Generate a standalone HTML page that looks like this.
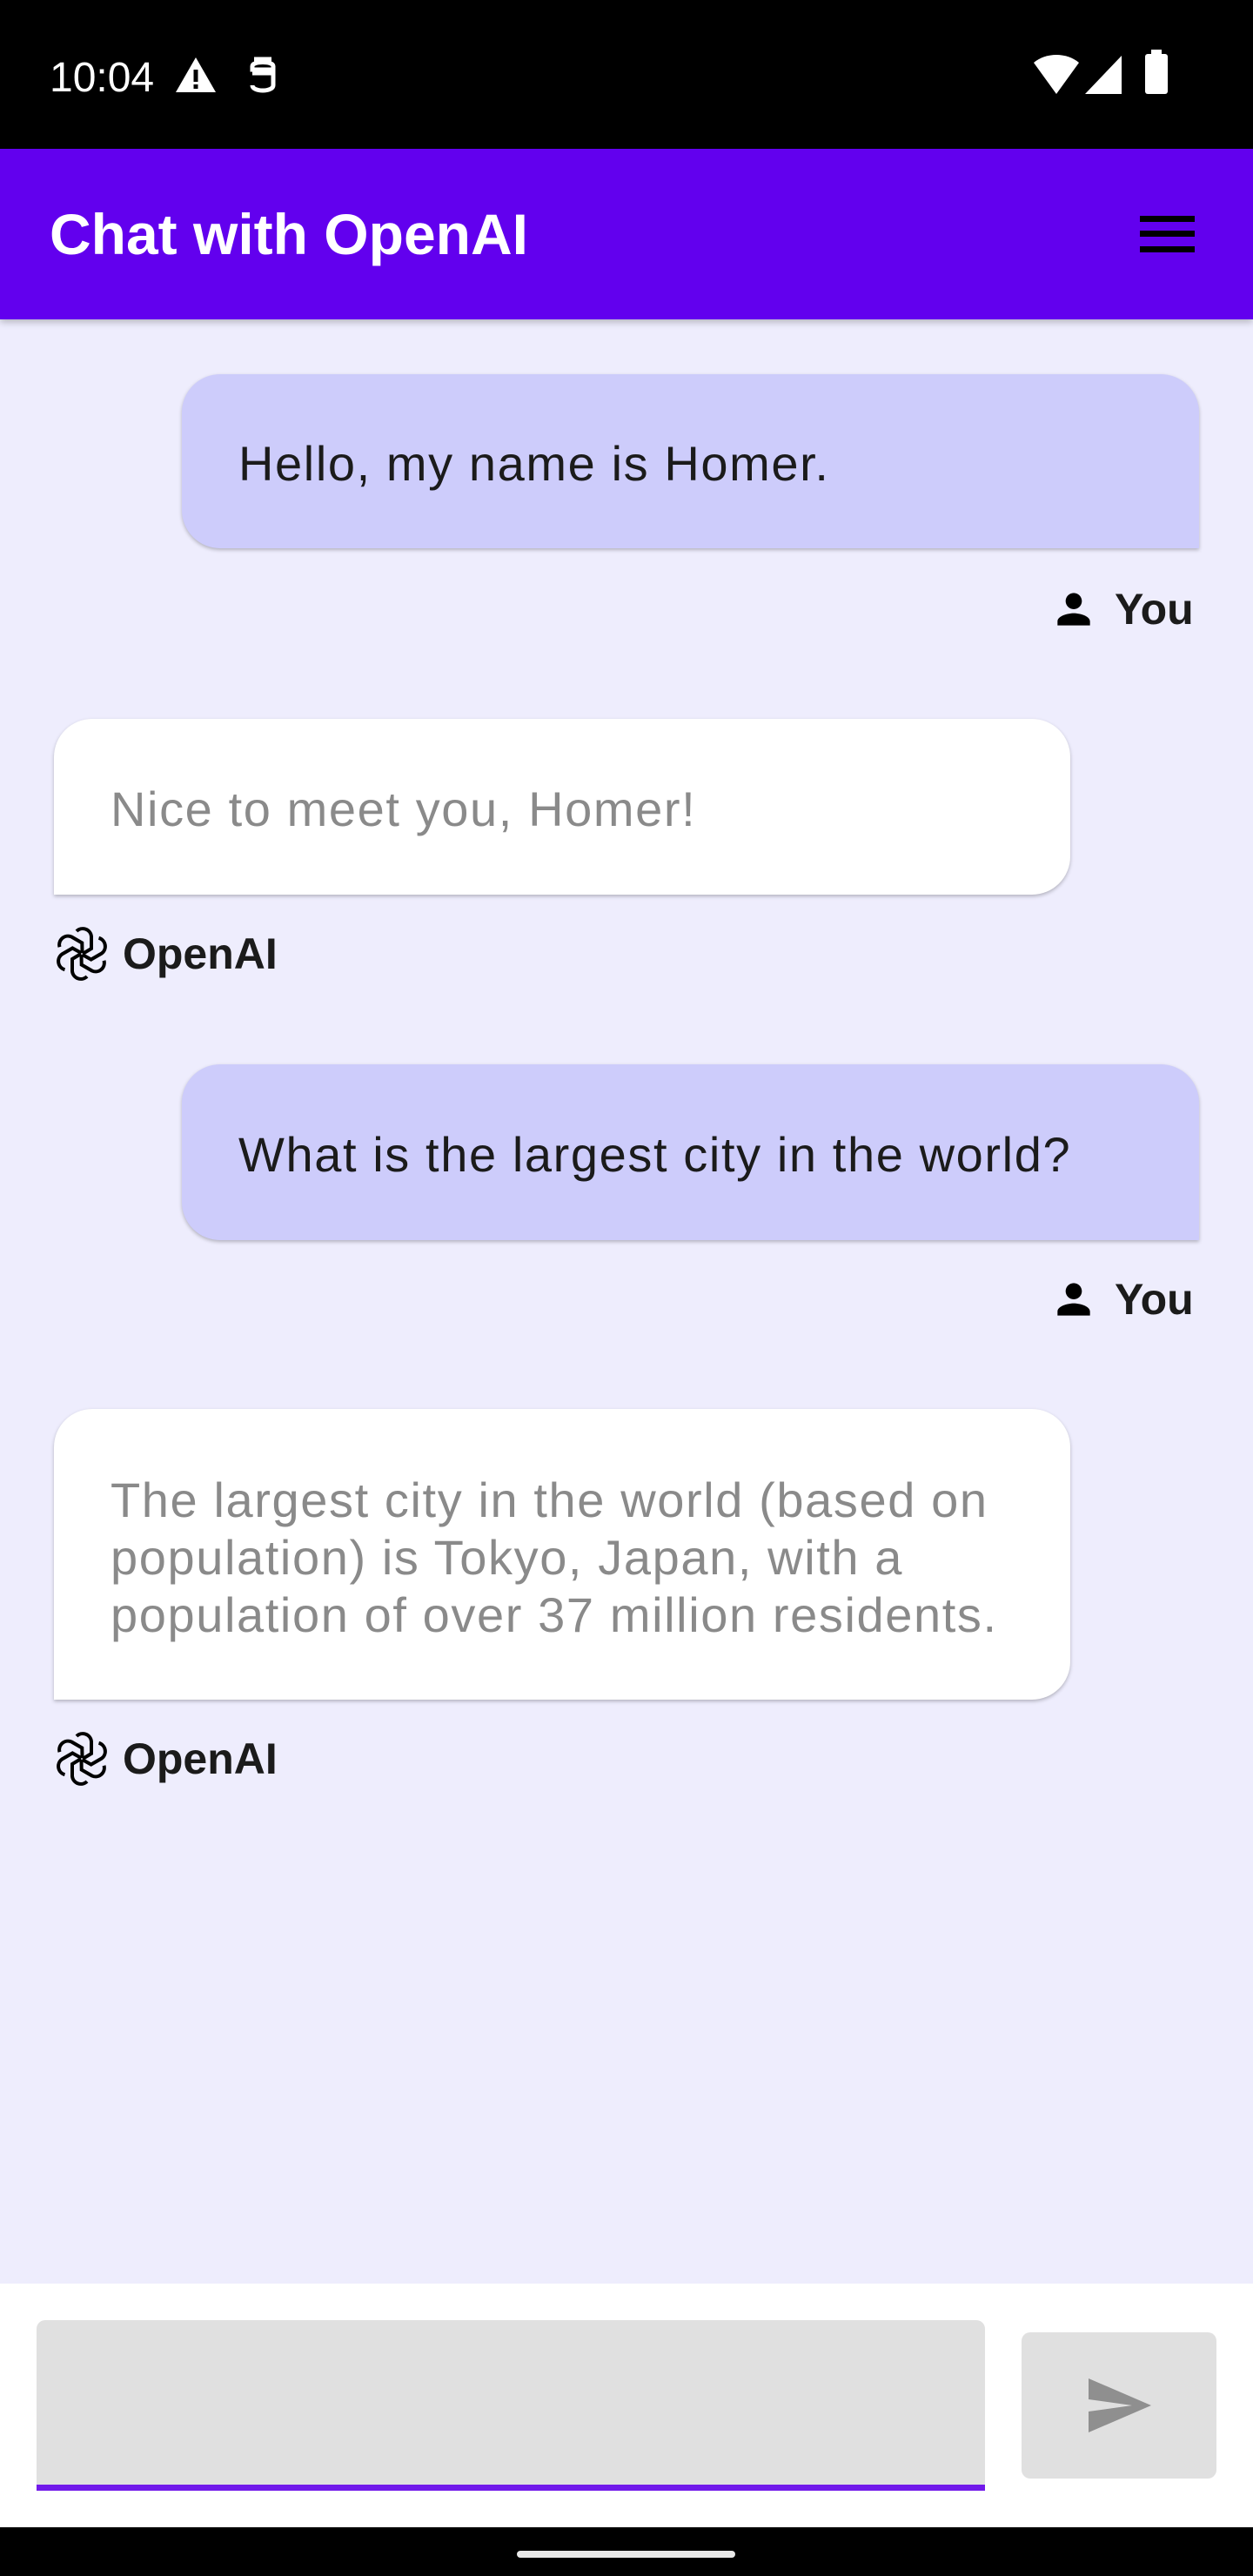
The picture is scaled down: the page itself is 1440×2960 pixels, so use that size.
<!DOCTYPE html>
<html><head><meta charset="utf-8"><style>
*{margin:0;padding:0;box-sizing:border-box}
body{width:1440px;height:2960px;background:#EEEDFD;font-family:"Liberation Sans",sans-serif;position:relative;overflow:hidden}
.abs{position:absolute}
.status{left:0;top:0;width:1440px;height:171px;background:#000}
.bar{left:0;top:171px;width:1440px;height:196px;background:#6200EE;box-shadow:0 3px 8px rgba(0,0,0,.25)}
.title{left:57px;top:231px;color:#fff;font-size:66px;font-weight:bold;letter-spacing:0px}
.bub{position:absolute;font-size:56px;letter-spacing:1.6px;box-shadow:0 2px 4px rgba(0,0,0,.25)}
.u{background:#CDCCFB;color:#1b1b1b;border-radius:44px 44px 0 44px;left:209px;width:1169px;height:200px;padding-left:65px;line-height:206px}
.a{background:#fff;color:#8a8a8a;border-radius:44px 44px 44px 0;left:62px;width:1168px;padding-left:65px}
.lbl{position:absolute;font-size:50px;color:#1b1b1b;font-weight:bold}
</style></head><body>
<div class="abs status"></div>
<div class="abs" style="left:57px;top:62px;color:#fff;font-size:48px">10:04</div>
<svg class="abs" style="left:200px;top:64px" width="50" height="44" viewBox="0 0 50 44"><path d="M25 2 L48 42 H2 Z" fill="#fff"/><rect x="22.5" y="16" width="5" height="14" fill="#000"/><rect x="22.5" y="33" width="5" height="5" fill="#000"/></svg>
<svg class="abs" style="left:284px;top:62px" width="36" height="48" viewBox="0 0 36 48"><path d="M8 6h20M6 14c0-6 24-6 24 0v4H6zM6 22h24v14c0 8-24 8-24 0" stroke="#fff" stroke-width="5" fill="none"/></svg>
<svg class="abs" style="left:1186px;top:62px" width="56" height="48" viewBox="0 0 56 48"><path d="M28 46 L2 10 C16 -2 40 -2 54 10 Z" fill="#fff"/></svg>
<svg class="abs" style="left:1245px;top:62px" width="46" height="46"><path d="M44 2 V46 H2 Z" fill="#fff"/></svg>
<div class="abs" style="left:1316px;top:62px;width:26px;height:46px;background:#fff;border-radius:3px"></div>
<div class="abs" style="left:1323px;top:57px;width:12px;height:6px;background:#fff"></div>
<div class="abs bar"></div>
<div class="abs title">Chat with OpenAI</div>
<div class="abs" style="left:1310px;top:248px;width:63px;height:7px;background:#000"></div>
<div class="abs" style="left:1310px;top:265px;width:63px;height:7px;background:#000"></div>
<div class="abs" style="left:1310px;top:283px;width:63px;height:7px;background:#000"></div>

<div class="bub u" style="top:430px">Hello, my name is Homer.</div>
<svg class="abs" style="left:1206px;top:672px" width="56" height="56" viewBox="0 0 24 24"><path d="M12 12c2.2 0 4-1.8 4-4s-1.8-4-4-4-4 1.8-4 4 1.8 4 4 4zm0 2c-2.7 0-8 1.3-8 4v2h16v-2c0-2.7-5.3-4-8-4z" fill="#000"/></svg>
<div class="lbl" style="left:1281px;top:671px">You</div>

<div class="bub a" style="top:826px;height:202px;line-height:208px">Nice to meet you, Homer!</div>
<svg class="abs logo" style="left:62px;top:1064px" width="64" height="64" viewBox="-32 -32 64 64"><g fill="none" stroke="#000" stroke-width="4"><g id="p"><path d="M-6 -26 a10 10 0 0 1 17 6 v14 l-10 6"/></g><use href="#p" transform="rotate(60)"/><use href="#p" transform="rotate(120)"/><use href="#p" transform="rotate(180)"/><use href="#p" transform="rotate(240)"/><use href="#p" transform="rotate(300)"/></g></svg>
<div class="lbl" style="left:141px;top:1067px">OpenAI</div>

<div class="bub u" style="top:1223px;height:202px;line-height:208px">What is the largest city in the world?</div>
<svg class="abs" style="left:1206px;top:1465px" width="56" height="56" viewBox="0 0 24 24"><path d="M12 12c2.2 0 4-1.8 4-4s-1.8-4-4-4-4 1.8-4 4 1.8 4 4 4zm0 2c-2.7 0-8 1.3-8 4v2h16v-2c0-2.7-5.3-4-8-4z" fill="#000"/></svg>
<div class="lbl" style="left:1281px;top:1464px">You</div>

<div class="bub a" style="top:1619px;height:334px;padding-top:72px;line-height:66px;padding-right:10px">The largest city in the world (based on population) is Tokyo, Japan, with a population of over 37 million residents.</div>
<svg class="abs" style="left:62px;top:1989px" width="64" height="64" viewBox="-32 -32 64 64"><g fill="none" stroke="#000" stroke-width="4"><g id="q"><path d="M-6 -26 a10 10 0 0 1 17 6 v14 l-10 6"/></g><use href="#q" transform="rotate(60)"/><use href="#q" transform="rotate(120)"/><use href="#q" transform="rotate(180)"/><use href="#q" transform="rotate(240)"/><use href="#q" transform="rotate(300)"/></g></svg>
<div class="lbl" style="left:141px;top:1992px">OpenAI</div>

<div class="abs" style="left:0;top:2624px;width:1440px;height:280px;background:#fff"></div>
<div class="abs" style="left:42px;top:2666px;width:1090px;height:196px;background:#E0E0E0;border-radius:10px 10px 0 0;border-bottom:7px solid #7119EA"></div>
<div class="abs" style="left:1174px;top:2680px;width:224px;height:168px;background:#E0E0E0;border-radius:10px"></div>
<svg class="abs" style="left:1251px;top:2733px" width="72" height="62" viewBox="0 0 72 62"><path d="M0 0 L72 31 L0 62 V38 L50 31 L0 24 Z" fill="#8f8f8f"/></svg>
<div class="abs" style="left:0;top:2904px;width:1440px;height:56px;background:#000"></div>
<div class="abs" style="left:594px;top:2931px;width:251px;height:8px;background:#e8e8e8;border-radius:4px"></div>
</body></html>
